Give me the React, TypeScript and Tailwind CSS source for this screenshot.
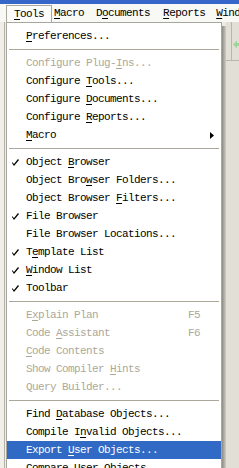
import React from "react";

type Item =
  | "sep"
  | {
      label: string;
      check?: boolean;
      disabled?: boolean;
      shortcut?: string;
      submenu?: boolean;
      active?: boolean;
    };

// "&" marks the accelerator letter
const items: Item[] = [
  { label: "&Preferences..." },
  "sep",
  { label: "Configure Plug-&Ins...", disabled: true },
  { label: "Configure &Tools..." },
  { label: "Configure &Documents..." },
  { label: "Configure &Reports..." },
  { label: "&Macro", submenu: true },
  "sep",
  { label: "Object &Browser", check: true },
  { label: "Object Bro&wser Folders..." },
  { label: "Object Browser &Filters..." },
  { label: "File Browser", check: true },
  { label: "File Browser Locations..." },
  { label: "T&emplate List", check: true },
  { label: "&Window List", check: true },
  { label: "Toolbar", check: true },
  "sep",
  { label: "E&xplain Plan", disabled: true, shortcut: "F5" },
  { label: "Code &Assistant", disabled: true, shortcut: "F6" },
  { label: "&Code Contents", disabled: true },
  { label: "Show Compiler &Hints", disabled: true },
  { label: "Query Builder...", disabled: true },
  "sep",
  { label: "Find &Database Objects..." },
  { label: "Compile I&nvalid Objects..." },
  { label: "Export &User Objects...", active: true },
  { label: "Compare User Objects..." },
];

function Label({ text }: { text: string }) {
  const i = text.indexOf("&");
  if (i < 0) return <>{text}</>;
  return (
    <>
      {text.slice(0, i)}
      <span className="underline underline-offset-2">{text[i + 1]}</span>
      {text.slice(i + 2)}
    </>
  );
}

function Check({ white }: { white?: boolean }) {
  return (
    <svg width="7" height="7" viewBox="0 0 7 7">
      <path
        d="M0 3 L2 5 L6 0 L7 1 L2 7 L0 4 Z"
        fill={white ? "#fff" : "#000"}
      />
    </svg>
  );
}

function MenuRow({ item }: { item: Exclude<Item, "sep"> }) {
  const color = item.active
    ? "bg-[#316ac5] text-white"
    : item.disabled
      ? "text-[#aca899]"
      : "text-black";
  return (
    <div className={`flex h-[18px] shrink-0 items-center ${color}`}>
      <div className="flex w-[19px] items-center pl-[5px]">
        {item.check && <Check white={item.active} />}
      </div>
      <div className="flex-1 whitespace-nowrap">
        <Label text={item.label} />
      </div>
      <div className="w-[20px] whitespace-nowrap">{item.shortcut}</div>
      <div className="flex w-[13px] items-center pl-[2px]">
        {item.submenu && (
          <svg width="4" height="7" viewBox="0 0 4 7">
            <path d="M0 0 L4 3.5 L0 7 Z" fill="#000" />
          </svg>
        )}
      </div>
    </div>
  );
}

export default function App() {
  return (
    <div className="relative flex h-[468px] w-[239px] flex-col overflow-hidden bg-[#eceae2] font-['Liberation_Mono',monospace] text-[11px] tracking-[-0.6px] leading-none">
      {/* title bar edge */}
      <div className="h-[4px] shrink-0 bg-[#3566c8]" />

      {/* menubar */}
      <div className="flex h-[18px] shrink-0 items-stretch overflow-hidden bg-[#f8f8f5] pl-[6px] text-black">
        <div className="mt-[1px] flex items-center border border-b-0 border-[#a9a79d] bg-[#fbfbf9] px-[7px] pt-[1px]">
          <Label text="&Tools" />
        </div>
        <div className="ml-[2px] flex items-center pt-[1px]">
          <Label text="&Macro" />
        </div>
        <div className="ml-[12px] flex items-center pt-[1px]">
          <Label text="D&ocuments" />
        </div>
        <div className="ml-[13px] flex items-center pt-[1px]">
          <Label text="&Reports" />
        </div>
        <div className="ml-[11px] flex items-center whitespace-nowrap pt-[1px]">
          <Label text="&Window" />
        </div>
      </div>

      <div className="flex min-h-0 flex-1">
        {/* window edge left of the menu */}
        <div className="flex w-[6px] shrink-0 bg-[#efeee9]">
          <div className="ml-[4px] w-[1px] bg-[#b3b1a8]" />
        </div>

        {/* dropdown */}
        <div className="flex w-[216px] shrink-0 flex-col border border-b-0 border-[#a9a79d] bg-white pt-[4px]">
          {items.map((it, i) =>
            it === "sep" ? (
              <div key={i} className="flex h-[9px] shrink-0 items-center px-[2px]">
                <div className="h-[1px] flex-1 bg-[#aca899]" />
              </div>
            ) : (
              <MenuRow key={i} item={it} />
            ),
          )}
        </div>

        {/* menu shadow */}
        <div className="mt-[4px] w-[4px] shrink-0 bg-linear-to-r from-[#8e8c85] to-[#cfccc3]" />

        {/* partial toolbar to the right */}
        <div className="flex flex-1 flex-col bg-[#e2dfd6]">
          <div className="ml-[5px] flex h-[38px] flex-col border-l border-[#b9b6ac] pt-[18px]">
            <svg width="8" height="9" viewBox="0 0 8 9" className="ml-[1px]">
              <path d="M0 4.5 L4 0.5 L4 3 L8 3 L8 6 L4 6 L4 8.5 Z" fill="#9fd49a" />
            </svg>
          </div>
          <div className="h-[1px] bg-[#b9b6ac]" />
        </div>
      </div>
    </div>
  );
}
